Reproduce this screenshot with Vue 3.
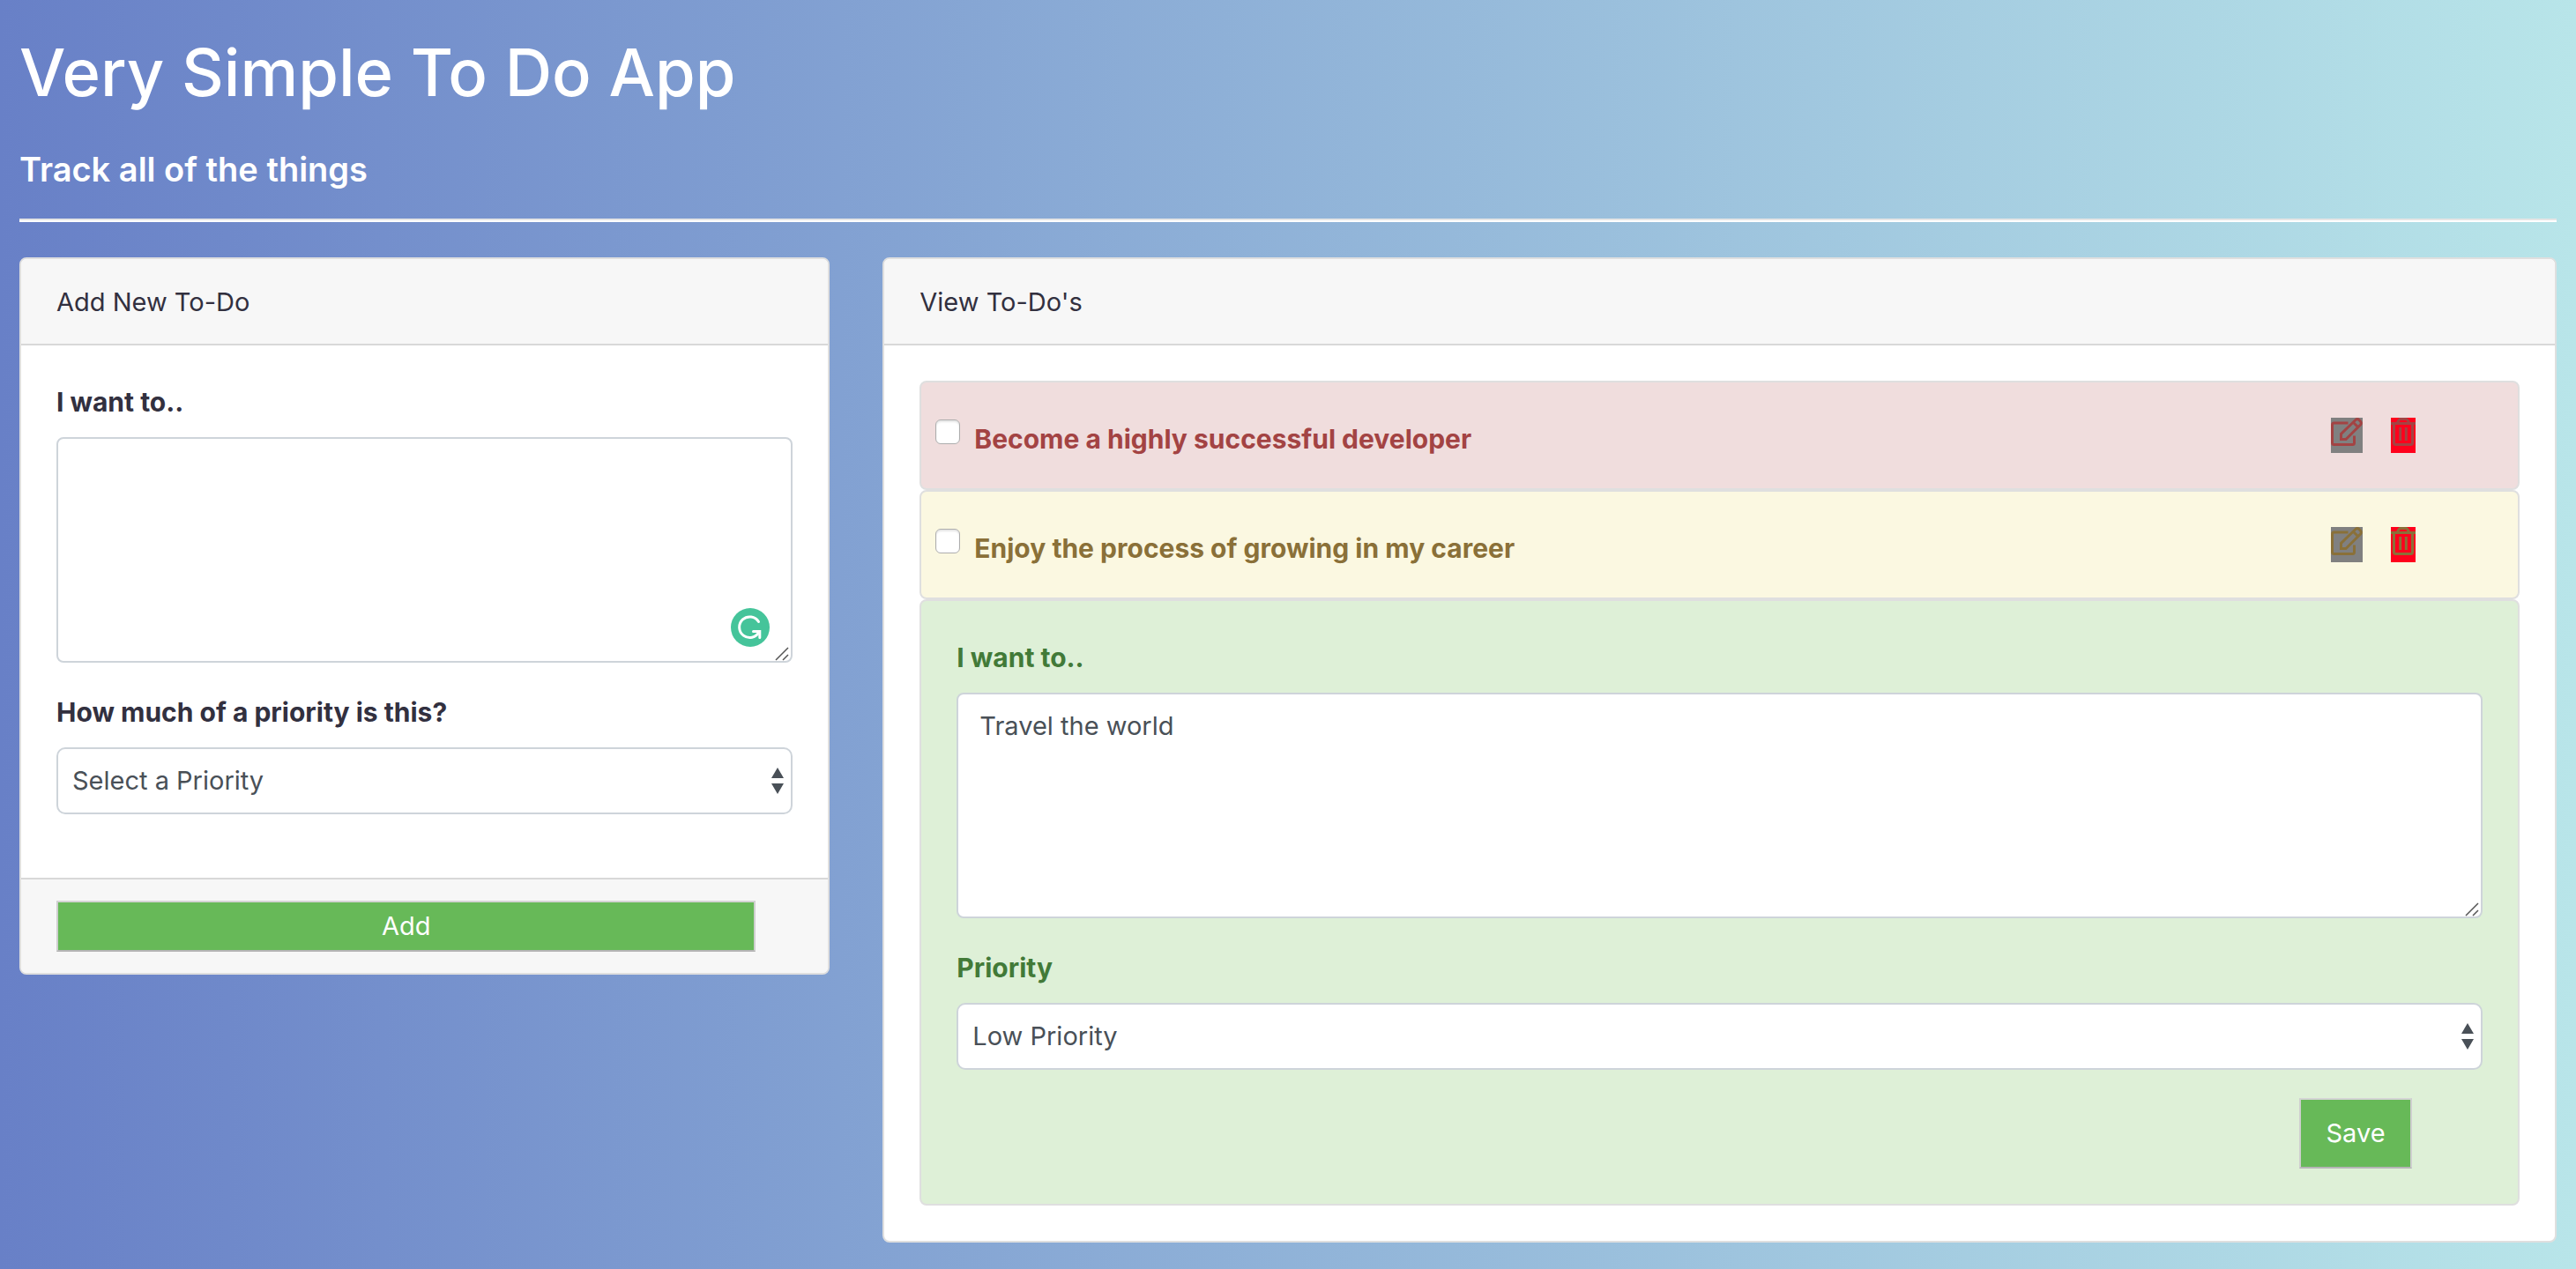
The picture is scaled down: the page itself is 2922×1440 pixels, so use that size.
<script setup>
import { ref } from 'vue'

const newTodo = ref('')
const newPriority = ref('')
const editText = ref('Travel the world')
const editPriority = ref('low')
const todos = [
  { id: 1, text: 'Become a highly successful developer', level: 'high' },
  { id: 2, text: 'Enjoy the process of growing in my career', level: 'medium' },
]
</script>

<template>
  <main class="page">
    <header class="masthead">
      <h1>Very Simple To Do App</h1>
      <h4>Track all of the things</h4>
    </header>

    <div class="columns">
      <section class="card add-card">
        <h2 class="card-header">Add New To-Do</h2>
        <div class="card-body">
          <label class="label" for="new-text">I want to..</label>
          <div class="area-wrap">
            <textarea id="new-text" v-model="newTodo" class="area"></textarea>
            <svg class="checker" viewBox="0 0 44 44" aria-hidden="true">
              <circle cx="22" cy="22" r="22" fill="#45c49a" />
              <path d="M31.500 15.500A11.800 11.800 0 1 0 32 27" fill="none" stroke="#fff" stroke-width="3" stroke-linecap="round" />
              <path d="M25.500 26.500H32.800V33.500" fill="none" stroke="#fff" stroke-width="3" stroke-linecap="round" />
            </svg>
            <svg class="grip" viewBox="0 0 16 16" aria-hidden="true">
              <path d="M1 15 15 1M9 15 15 9" />
            </svg>
          </div>
          <label class="label" for="new-priority">How much of a priority is this?</label>
          <div class="select-wrap">
            <select id="new-priority" v-model="newPriority" class="select">
              <option value="">Select a Priority</option>
              <option value="high">High Priority</option>
              <option value="medium">Medium Priority</option>
              <option value="low">Low Priority</option>
            </select>
            <svg class="arrows" viewBox="0 0 16 30" aria-hidden="true">
              <path d="M1 12 8 0 15 12ZM1 18 8 30 15 18Z" />
            </svg>
          </div>
        </div>
        <div class="card-footer">
          <button class="btn btn-add" type="button">Add</button>
        </div>
      </section>

      <section class="card view-card">
        <h2 class="card-header">View To-Do's</h2>
        <ul class="list">
          <li v-for="todo in todos" :key="todo.id" class="item row" :class="todo.level">
            <input :id="'todo-' + todo.id" class="check" type="checkbox" />
            <label class="todo-text" :for="'todo-' + todo.id">{{ todo.text }}</label>
            <button class="icon-btn edit" type="button" aria-label="Edit">
              <svg viewBox="0 0 36 40" aria-hidden="true">
                <path d="M19.500 6H3.500Q1.500 6 1.500 8V28.500Q1.500 30.500 3.500 30.500H24.500Q26.500 30.500 26.500 28.500V20.500" />
                <path d="M11.500 24.500V18.500L28 2.500Q30 .7 32 2.500L33.500 4.200Q35.200 6 33.500 8L17 24.500ZM25.500 5.500 31 10.800" />
              </svg>
            </button>
            <button class="icon-btn remove" type="button" aria-label="Delete">
              <svg viewBox="0 0 28 40" aria-hidden="true">
                <path d="M0 6.500H28M3.500 6.500V28.500Q3.500 30.500 5.500 30.500H22.500Q24.500 30.500 24.500 28.500V6.500M7.500 6Q9 1.500 11 1.500H17Q19 1.500 20.500 6M10.700 11V26M17.300 11V26" />
              </svg>
            </button>
          </li>
          <li class="item edit-item low">
            <label class="label" for="edit-text">I want to..</label>
            <div class="area-wrap">
              <textarea id="edit-text" v-model="editText" class="area"></textarea>
              <svg class="grip" viewBox="0 0 16 16" aria-hidden="true">
                <path d="M1 15 15 1M9 15 15 9" />
              </svg>
            </div>
            <label class="label" for="edit-priority">Priority</label>
            <div class="select-wrap">
              <select id="edit-priority" v-model="editPriority" class="select">
                <option value="high">High Priority</option>
                <option value="medium">Medium Priority</option>
                <option value="low">Low Priority</option>
              </select>
              <svg class="arrows" viewBox="0 0 16 30" aria-hidden="true">
                <path d="M1 12 8 0 15 12ZM1 18 8 30 15 18Z" />
              </svg>
            </div>
            <div class="actions">
              <button class="btn btn-save" type="button">Save</button>
            </div>
          </li>
        </ul>
      </section>
    </div>
  </main>
</template>

<style>
body {
  margin: 0;
}
</style>

<style scoped>
.page,
.page * {
  box-sizing: border-box;
}

.page {
  min-height: 100vh;
  padding: 32px 22px 30px;
  background: linear-gradient(to right, #6880c7, #b8e5e9);
  color: #32303f;
  font-family: Inter, "Liberation Sans", sans-serif;
  font-size: 29px;
  line-height: 48px;
}

.masthead {
  border-bottom: 2px solid #fff;
  margin-bottom: 40px;
  color: #fff;
}

.masthead::after {
  content: "";
  display: block;
  height: 2px;
  background: #e5e5e5;
}

h1 {
  margin: 0;
  font-size: 74px;
  font-weight: 500;
  line-height: 100px;
}

h4 {
  margin: 0;
  padding: 36px 0 32px;
  font-size: 38px;
  font-weight: 600;
  line-height: 48px;
}

.columns {
  display: grid;
  grid-template-columns: repeat(12, 1fr);
  column-gap: 60px;
  align-items: start;
}

.card {
  border: 2px solid #dfdfdf;
  border-radius: 8px;
  background: #fff;
  overflow: hidden;
}

.add-card {
  grid-column: span 4;
}

.view-card {
  grid-column: span 8;
}

.card-header {
  margin: 0;
  padding: 25px 40px 23px;
  border-bottom: 2px solid #d8d8d8;
  background: #f7f7f7;
  font-size: 29px;
  font-weight: 400;
  line-height: 48px;
}

.card-body {
  padding: 40px 40px 72px;
}

.label {
  display: block;
  margin-bottom: 16px;
  font-size: 30px;
  font-weight: 700;
}

.area-wrap {
  position: relative;
  margin-bottom: 32px;
}

.area {
  display: block;
  width: 100%;
  height: 256px;
  padding: 12px 24px;
  border: 2px solid #ced4da;
  border-radius: 8px;
  background: #fff;
  color: #495057;
  font: inherit;
  resize: none;
}

.grip {
  position: absolute;
  right: 4px;
  bottom: 2px;
  width: 16px;
  height: 16px;
  fill: none;
  stroke: #555;
  stroke-width: 1.5;
}

.checker {
  position: absolute;
  right: 26px;
  bottom: 18px;
  width: 44px;
  height: 44px;
}

.select-wrap {
  position: relative;
}

.select {
  display: block;
  width: 100%;
  height: 76px;
  padding: 0 56px 0 16px;
  border: 2px solid #ced4da;
  border-radius: 10px;
  background: #fff;
  color: #495057;
  font: inherit;
  appearance: none;
}

.arrows {
  position: absolute;
  top: 23px;
  right: 9px;
  width: 16px;
  height: 30px;
  fill: #495057;
  pointer-events: none;
}

.card-footer {
  padding: 24px 82px 24px 40px;
  border-top: 2px solid #d8d8d8;
  background: #f7f7f7;
}

.btn {
  border: 2px solid;
  border-color: #d4d4d4 #cfcfcf #b5b5b5 #cfcfcf;
  border-radius: 0;
  background: #67b958;
  color: #fff;
  font: inherit;
}

.btn-add {
  display: block;
  width: 100%;
  height: 58px;
  padding: 0;
}

.list {
  margin: 0;
  padding: 40px;
  list-style: none;
}

.item {
  border: 2px solid #dfdfdf;
  border-radius: 8px;
}

.row {
  display: flex;
  align-items: flex-start;
  height: 124px;
  padding: 40px 116px 0 16px;
}

.high {
  background: #f0dddd;
  color: #a34343;
}

.medium {
  background: #fbf8e1;
  color: #8a7038;
}

.low {
  background: #def0d7;
  color: #427a38;
}

.check {
  width: 28px;
  height: 28px;
  margin: 2px 16px 0 0;
  border: 1px solid #adadad;
  border-radius: 6px;
  background: #fff;
  box-shadow: inset 0 2px 2px #e6e6e6;
  appearance: none;
}

.todo-text {
  flex: 1;
  font-size: 30px;
  font-weight: 700;
}

.icon-btn {
  height: 40px;
  padding: 0;
  border: 0;
  color: inherit;
}

.icon-btn svg {
  display: block;
  width: 100%;
  height: 100%;
  fill: none;
  stroke: currentColor;
  stroke-width: 3;
}

.edit {
  width: 36px;
  margin-right: 32px;
  background: #808080;
}

.remove {
  width: 28px;
  background: #ff001c;
}

.edit-item {
  padding: 40px;
}

.actions {
  display: flex;
  justify-content: flex-end;
  padding: 32px 80px 0 0;
}

.btn-save {
  width: 128px;
  height: 80px;
  padding: 0;
}
</style>
